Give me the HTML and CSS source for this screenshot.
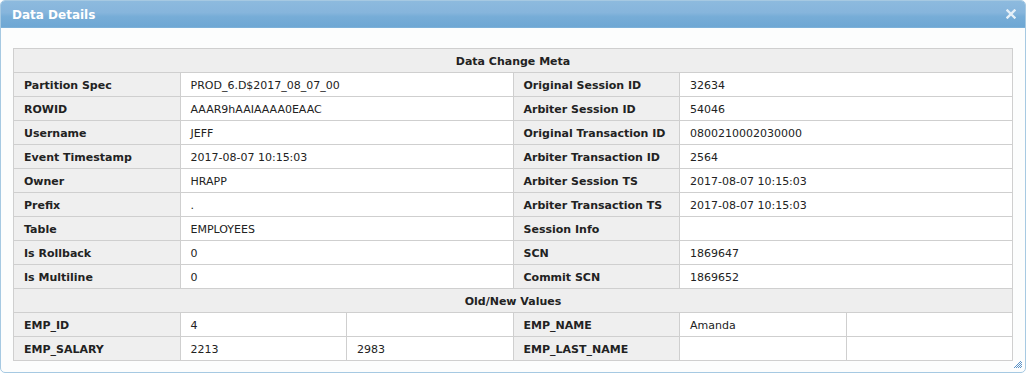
FILE: index.html
```html
<!DOCTYPE html>
<html>
<head>
<meta charset="utf-8">
<link rel="stylesheet" href="styles.css">
</head>
<body>
<div class="dialog">
  <div class="titlebar">
    <span class="title">Data Details</span>
    <svg class="close" width="10" height="10" viewBox="0 0 10 10"><path d="M1.5 1.5 L8.5 8.5 M8.5 1.5 L1.5 8.5" stroke="#e6f0f8" stroke-width="2.4" stroke-linecap="square"/></svg>
  </div>
  <div class="content">
    <table class="grid">
      <colgroup><col><col><col><col><col><col></colgroup>
      <tr><th colspan="6" class="section">Data Change Meta</th></tr>
      <tr><th>Partition Spec</th><td colspan="2">PROD_6.D$2017_08_07_00</td><th>Original Session ID</th><td colspan="2">32634</td></tr>
      <tr><th>ROWID</th><td colspan="2">AAAR9hAAIAAAA0EAAC</td><th>Arbiter Session ID</th><td colspan="2">54046</td></tr>
      <tr><th>Username</th><td colspan="2">JEFF</td><th>Original Transaction ID</th><td colspan="2">0800210002030000</td></tr>
      <tr><th>Event Timestamp</th><td colspan="2">2017-08-07 10:15:03</td><th>Arbiter Transaction ID</th><td colspan="2">2564</td></tr>
      <tr><th>Owner</th><td colspan="2">HRAPP</td><th>Arbiter Session TS</th><td colspan="2">2017-08-07 10:15:03</td></tr>
      <tr><th>Prefix</th><td colspan="2">.</td><th>Arbiter Transaction TS</th><td colspan="2">2017-08-07 10:15:03</td></tr>
      <tr><th>Table</th><td colspan="2">EMPLOYEES</td><th>Session Info</th><td colspan="2"></td></tr>
      <tr><th>Is Rollback</th><td colspan="2">0</td><th>SCN</th><td colspan="2">1869647</td></tr>
      <tr><th>Is Multiline</th><td colspan="2">0</td><th>Commit SCN</th><td colspan="2">1869652</td></tr>
      <tr><th colspan="6" class="section">Old/New Values</th></tr>
      <tr><th>EMP_ID</th><td>4</td><td></td><th>EMP_NAME</th><td>Amanda</td><td></td></tr>
      <tr><th>EMP_SALARY</th><td>2213</td><td>2983</td><th>EMP_LAST_NAME</th><td></td><td></td></tr>
    </table>
  </div>
  <svg class="grip" width="8" height="8" viewBox="0 0 8 8">
    <g fill="#5b93c8">
      <rect x="6" y="0" width="1" height="1"/>
      <rect x="5" y="1" width="1" height="1"/><rect x="7" y="1" width="1" height="1"/>
      <rect x="4" y="2" width="1" height="1"/><rect x="6" y="2" width="1" height="1"/>
      <rect x="3" y="3" width="1" height="1"/><rect x="5" y="3" width="1" height="1"/><rect x="7" y="3" width="1" height="1"/>
      <rect x="2" y="4" width="1" height="1"/><rect x="4" y="4" width="1" height="1"/><rect x="6" y="4" width="1" height="1"/>
      <rect x="1" y="5" width="1" height="1"/><rect x="3" y="5" width="1" height="1"/><rect x="5" y="5" width="1" height="1"/><rect x="7" y="5" width="1" height="1"/>
      <rect x="0" y="6" width="1" height="1"/><rect x="2" y="6" width="1" height="1"/><rect x="4" y="6" width="1" height="1"/><rect x="6" y="6" width="1" height="1"/>
    </g>
  </svg>
</div>
</body>
</html>
```
FILE: styles.css
```css
html, body {
  margin: 0;
  padding: 0;
  background: #ffffff;
}
body {
  font-family: "DejaVu Sans", Verdana, sans-serif;
  font-size: 11px;
  color: #222;
}
.dialog {
  position: relative;
  width: 1024px;
  height: 371px;
  border: 1px solid #a6c9e2;
  border-radius: 5px;
  background: #fcfdfd;
  overflow: hidden;
}
.titlebar {
  height: 26px;
  display: flex;
  align-items: center;
  justify-content: space-between;
  padding: 0 8px 0 11px;
  background: linear-gradient(180deg, #8dbade 0%, #86b5dc 45%, #77add7 60%, #6ea7d4 100%);
  border-bottom: 1px solid #7cb0d8;
}
.title {
  color: #ffffff;
  font-weight: bold;
  font-size: 12px;
  padding-top: 1px;
}
.close {
  display: block;
  margin-right: 1px;
}
.content {
  padding: 20px 0 0 12px;
}
.grid {
  width: 1000px;
  table-layout: fixed;
  border-collapse: collapse;
  border: 1px solid #c8c8c8;
}
.grid th, .grid td {
  height: 24px;
  padding: 2px 10px 0;
  border: 1px solid #cfcfcf;
  text-align: left;
  white-space: nowrap;
  overflow: hidden;
  box-sizing: border-box;
  vertical-align: middle;
}
.grid th {
  background: #efefef;
  font-weight: bold;
  color: #222;
}
.grid td {
  background: #ffffff;
  color: #222;
}
.grid th.section {
  text-align: center;
  background: #eeeeee;
}
.grip {
  position: absolute;
  right: 3px;
  bottom: 3px;
}
```
